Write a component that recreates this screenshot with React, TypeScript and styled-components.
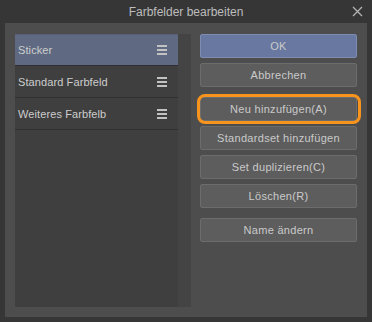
import React from "react";
import styled, { createGlobalStyle } from "styled-components";

const Global = createGlobalStyle`
  html, body { margin: 0; padding: 0; background: #353535; }
  body { font-family: "Liberation Sans", Arial, sans-serif; }
`;

const Window = styled.div`
  width: 372px;
  height: 322px;
  box-sizing: border-box;
  background: #363636;
  padding: 0 5px 5px 5px;
  display: flex;
  flex-direction: column;
`;

const TitleBar = styled.div`
  height: 23px;
  position: relative;
  display: flex;
  align-items: center;
  justify-content: center;
  color: #bdbdbd;
  font-size: 12px;
`;

const Close = styled.div`
  position: absolute;
  right: 4px;
  top: 6px;
  width: 11px;
  height: 11px;
  display: flex;
`;

const Body = styled.div`
  flex: 1;
  background: #4d4d4d;
  display: flex;
  padding: 11px 10px 10px 10px;
  gap: 9px;
`;

const ListPanel = styled.div`
  width: 176px;
  background: #3f3f3f;
  display: flex;
`;

const Rows = styled.div`
  flex: 1;
  display: flex;
  flex-direction: column;
`;

const Scroll = styled.div`
  width: 13px;
  background: #444444;
`;

const Row = styled.div<{ $selected?: boolean }>`
  height: 31px;
  border-bottom: 1px solid #303030;
  background: ${(p) => (p.$selected ? "#5f6a82" : "#3f3f3f")};
  box-shadow: ${(p) => (p.$selected ? "inset 0 1px 0 #56607a" : "none")};
  display: flex;
  align-items: center;
  justify-content: space-between;
  padding: 0 11px 0 3px;
  color: #cdcdcd;
  font-size: 11px;
  letter-spacing: 0.1px;
`;

const Burger = styled.div`
  width: 10px;
  display: flex;
  flex-direction: column;
  gap: 2px;
  span {
    display: block;
    height: 2px;
    background: #c2c2c2;
  }
`;

const Buttons = styled.div`
  width: 157px;
  display: flex;
  flex-direction: column;
  gap: 5px;
`;

const Button = styled.div<{ $primary?: boolean; $gapTop?: boolean; $highlight?: boolean }>`
  height: 24px;
  box-sizing: border-box;
  border-radius: 2px;
  border: 1px solid ${(p) => (p.$primary ? "#7d8cb0" : "#6c6c6c")};
  background: ${(p) => (p.$primary ? "#6878a0" : "#5d5d5d")};
  color: #cacaca;
  font-size: 11px;
  letter-spacing: 0.3px;
  display: flex;
  align-items: center;
  justify-content: center;
  margin-top: ${(p) => (p.$gapTop ? "5px" : "0")};
  position: relative;
  ${(p) =>
    p.$highlight
      ? `&::after {
    content: "";
    position: absolute;
    left: -4px;
    top: -4px;
    right: -5px;
    bottom: -4px;
    border: 3px solid #f7941d;
    border-radius: 8px;
  }`
      : ""}
`;

const sets = ["Sticker", "Standard Farbfeld", "Weiteres Farbfelb"];

export default function App() {
  return (
    <>
      <Global />
      <Window>
        <TitleBar>
          Farbfelder bearbeiten
          <Close>
            <svg width="11" height="11" viewBox="0 0 11 11">
              <path d="M1 1 L10 10 M10 1 L1 10" stroke="#b4b4b4" strokeWidth="1.3" />
            </svg>
          </Close>
        </TitleBar>
        <Body>
          <ListPanel>
            <Rows>
              {sets.map((s, i) => (
                <Row key={s} $selected={i === 0}>
                  {s}
                  <Burger>
                    <span />
                    <span />
                    <span />
                  </Burger>
                </Row>
              ))}
            </Rows>
            <Scroll />
          </ListPanel>
          <Buttons>
            <Button $primary>OK</Button>
            <Button>Abbrechen</Button>
            <Button $gapTop $highlight>Neu hinzufügen(A)</Button>
            <Button>Standardset hinzufügen</Button>
            <Button>Set duplizieren(C)</Button>
            <Button>Löschen(R)</Button>
            <Button $gapTop>Name ändern</Button>
          </Buttons>
        </Body>
      </Window>
    </>
  );
}
